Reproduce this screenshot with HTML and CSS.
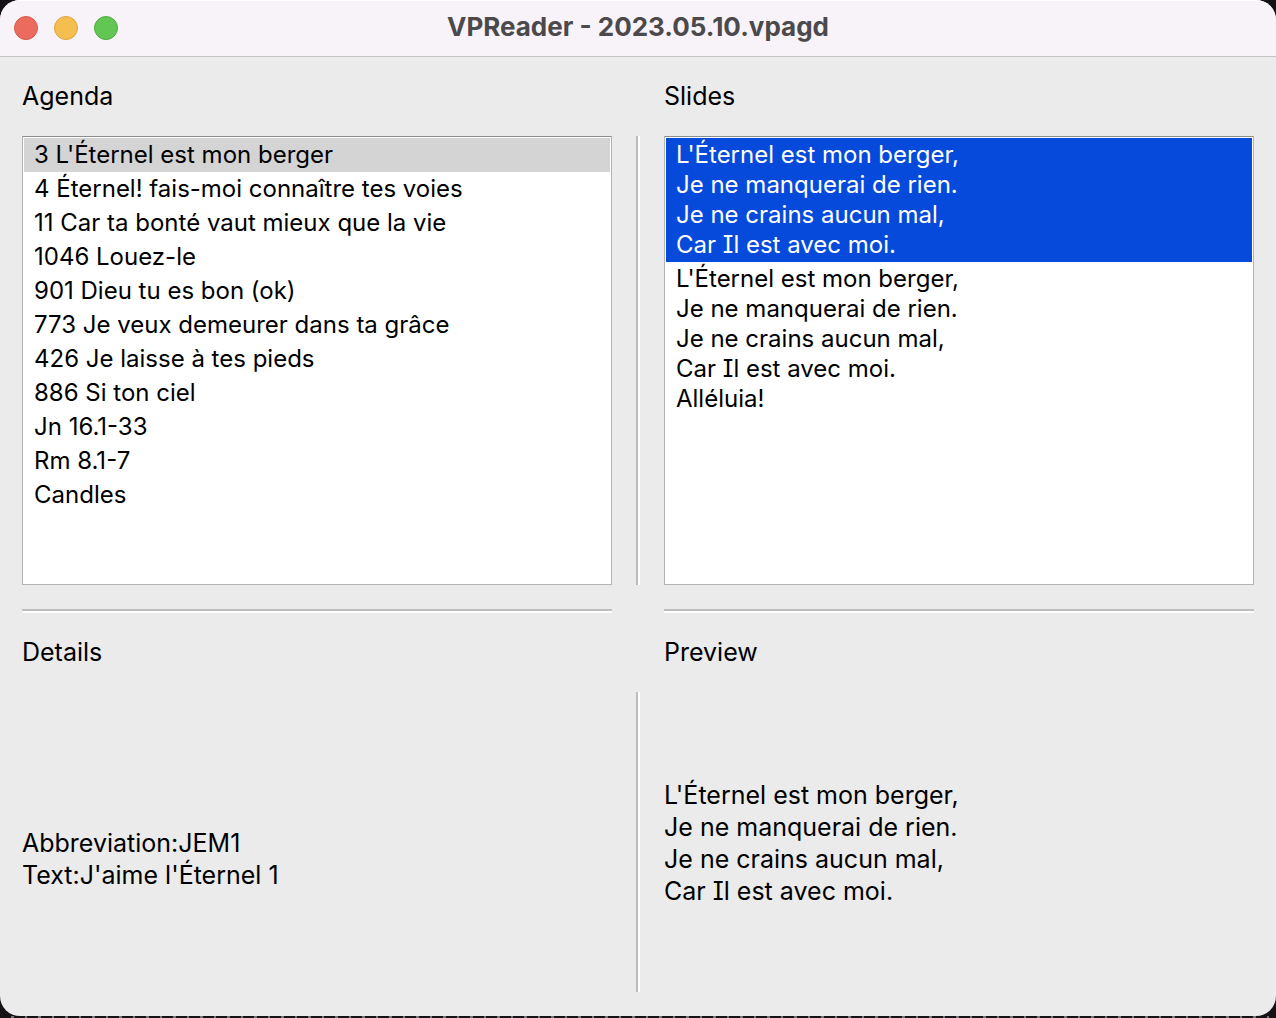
FILE: index.html
```html
<!DOCTYPE html>
<html lang="fr">
<head>
<meta charset="utf-8">
<meta name="viewport" content="width=device-width, initial-scale=1">
<title>VPReader - 2023.05.10.vpagd</title>
<link rel="stylesheet" href="styles.css">
</head>
<body>
<div class="window">
  <header class="titlebar">
    <div class="lights">
      <button class="light close" type="button" aria-label="Close"></button>
      <button class="light minimize" type="button" aria-label="Minimize"></button>
      <button class="light zoom" type="button" aria-label="Zoom"></button>
    </div>
    <h1 class="title">VPReader - 2023.05.10.vpagd</h1>
  </header>
  <main class="content">
    <h2 class="label left" id="agenda">Agenda</h2>
    <h2 class="label right" id="slides">Slides</h2>

    <ul class="list left" aria-labelledby="agenda">
      <li><button class="item current" type="button">3 L'Éternel est mon berger</button></li>
      <li><button class="item" type="button">4 Éternel! fais-moi connaître tes voies</button></li>
      <li><button class="item" type="button">11 Car ta bonté vaut mieux que la vie</button></li>
      <li><button class="item" type="button">1046 Louez-le</button></li>
      <li><button class="item" type="button">901 Dieu tu es bon (ok)</button></li>
      <li><button class="item" type="button">773 Je veux demeurer dans ta grâce</button></li>
      <li><button class="item" type="button">426 Je laisse à tes pieds</button></li>
      <li><button class="item" type="button">886 Si ton ciel</button></li>
      <li><button class="item" type="button">Jn 16.1-33</button></li>
      <li><button class="item" type="button">Rm 8.1-7</button></li>
      <li><button class="item" type="button">Candles</button></li>
    </ul>
    <div class="divider"></div>
    <ul class="list right" aria-labelledby="slides">
      <li><button class="item selected" type="button">L'Éternel est mon berger,<br>Je ne manquerai de rien.<br>Je ne crains aucun mal,<br>Car Il est avec moi.</button></li>
      <li><button class="item" type="button">L'Éternel est mon berger,<br>Je ne manquerai de rien.<br>Je ne crains aucun mal,<br>Car Il est avec moi.<br>Alléluia!</button></li>
    </ul>

    <hr class="rule left">
    <hr class="rule right">

    <h2 class="label left">Details</h2>
    <h2 class="label right">Preview</h2>

    <p class="text details left">Abbreviation:JEM1<br>Text:J'aime l'Éternel 1</p>
    <div class="divider"></div>
    <p class="text right">L'Éternel est mon berger,<br>Je ne manquerai de rien.<br>Je ne crains aucun mal,<br>Car Il est avec moi.</p>
  </main>
</div>
</body>
</html>
```
FILE: styles.css
```css
* {
  box-sizing: border-box;
}

body {
  margin: 0;
  min-height: 100vh;
  padding-bottom: 2px;
  display: flex;
  background: repeating-linear-gradient(90deg, #141215 0 11px, #77757a 11px 14px, #141215 14px 25px, #77757a 25px 27px) bottom / 100% 2px no-repeat #141215;
  color: #000;
  font: 25px/32px Inter, "Liberation Sans", sans-serif;
  font-feature-settings: "cv08";
}

.window {
  flex: 1;
  display: flex;
  flex-direction: column;
  overflow: hidden;
  border-radius: 20px;
  background: #ebebeb;
}

.titlebar {
  display: grid;
  grid-template-columns: 1fr auto 1fr;
  align-items: center;
  height: 57px;
  padding: 0 14px 1px;
  border-top: 1px solid #fff;
  border-bottom: 1px solid #c6c3c7;
  background: #f7f3f8;
}

.lights {
  display: flex;
  gap: 16px;
}

.light {
  width: 24px;
  height: 24px;
  padding: 0;
  border: 1px solid;
  border-radius: 50%;
}

.close {
  border-color: #d9574c;
  background: #ec6b5f;
}

.minimize {
  border-color: #dba43d;
  background: #f4bf50;
}

.zoom {
  border-color: #52aa40;
  background: #62c655;
}

.title {
  margin: 0;
  padding-bottom: 2px;
  color: #4b494c;
  font-size: 26px;
  font-weight: 700;
}

.content {
  flex: 1;
  display: grid;
  grid-template-columns: 1fr 4px 1fr;
  grid-template-rows: auto 3fr auto auto 2fr;
  gap: 24px;
  padding: 24px 22px;
}

.left {
  grid-column: 1;
}

.right {
  grid-column: 3;
}

.label {
  margin: 0;
  font-size: 25px;
  font-weight: 400;
  line-height: 31px;
}

.list {
  margin: 0;
  padding: 1px;
  list-style: none;
  border: 1px solid #b4b4b4;
  border-top-color: #8c8c8c;
  background: #fff;
}

.item {
  display: block;
  width: 100%;
  padding: 2px 10px;
  border: 0;
  background: transparent;
  color: inherit;
  font: inherit;
  font-feature-settings: inherit;
  font-size: 24px;
  line-height: 30px;
  text-align: left;
}

.current {
  background: #d4d4d4;
}

.selected {
  background: #064adb;
  color: #fff;
}

.divider {
  grid-column: 2;
  border-left: 2px solid #bdbdbd;
  border-right: 2px solid #fff;
}

.rule {
  width: 100%;
  height: 4px;
  margin: 0;
  border: 0;
  border-top: 2px solid #bdbdbd;
  border-bottom: 2px solid #fff;
}

.text {
  margin: 0;
  padding-top: 2px;
  align-self: center;
}

.details {
  padding-top: 34px;
}
```
